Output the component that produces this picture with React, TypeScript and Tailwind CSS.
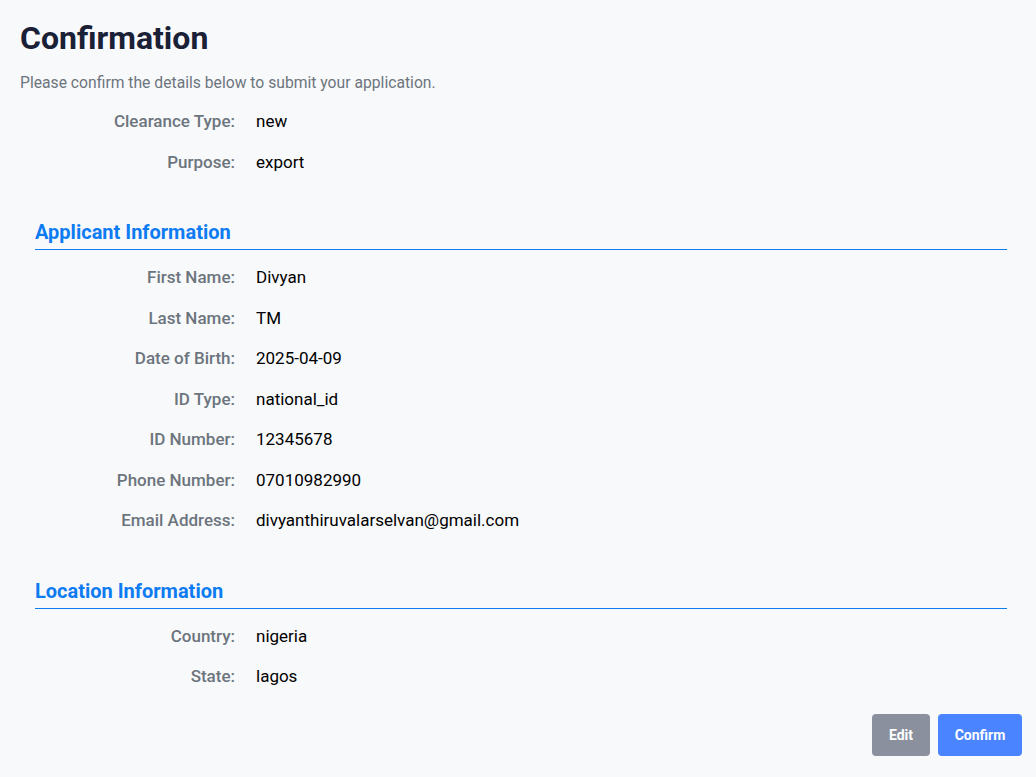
import React from "react";

const Row = ({ label, value }: { label: string; value: string }) => (
  <div className="flex items-center pt-[7.25px] pb-[9.25px] leading-6 text-[17px]">
    <div className="w-[200px] shrink-0 text-right font-medium text-[#6c757d]">{label}</div>
    <div className="ml-[21px] text-black">{value}</div>
  </div>
);

const Section = ({ title, children }: { title: string; children: React.ReactNode }) => (
  <div className="mt-[35px]">
    <h2 className="border-b border-[#0d7bf2] pb-[3px] text-[20px] font-bold leading-7 text-[#0d7bf2]">{title}</h2>
    <div className="mt-[8px]">{children}</div>
  </div>
);

export default function App() {
  return (
    <div
      className="min-h-[777px] bg-[#f8f9fb] pl-5 pr-[14px] pt-[18px]"
      style={{ fontFamily: "Roboto, 'Noto Sans', sans-serif" }}
    >
      <h1 className="text-[32px] font-bold leading-10 text-[#1a2036]">Confirmation</h1>
      <p className="mt-[13px] text-[15.7px] leading-6 text-[#6c757d]">
        Please confirm the details below to submit your application.
      </p>
      <div className="mx-[15px] mt-[7px]">
        <Row label="Clearance Type:" value="new" />
        <Row label="Purpose:" value="export" />
        <Section title="Applicant Information">
          <Row label="First Name:" value="Divyan" />
          <Row label="Last Name:" value="TM" />
          <Row label="Date of Birth:" value="2025-04-09" />
          <Row label="ID Type:" value="national_id" />
          <Row label="ID Number:" value="12345678" />
          <Row label="Phone Number:" value="07010982990" />
          <Row label="Email Address:" value="divyanthiruvalarselvan@gmail.com" />
        </Section>
        <Section title="Location Information">
          <Row label="Country:" value="nigeria" />
          <Row label="State:" value="lagos" />
        </Section>
      </div>
      <div className="mt-[16px] flex justify-end gap-2">
        <button className="h-[42px] w-[58px] rounded bg-[#8a909d] text-sm font-bold text-white">Edit</button>
        <button className="h-[42px] w-[84px] rounded bg-[#4a84fe] text-sm font-bold text-white">Confirm</button>
      </div>
    </div>
  );
}
